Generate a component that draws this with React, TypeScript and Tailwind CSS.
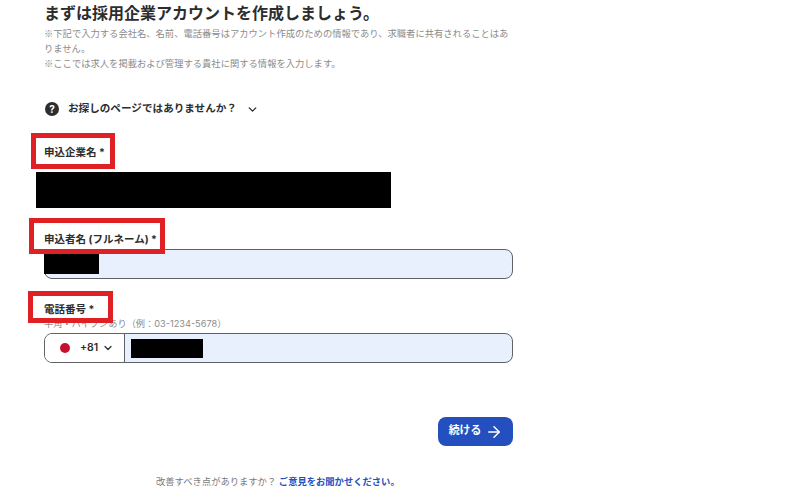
import React from 'react';
import { ArrowRight, ChevronDown } from 'lucide-react';

function RedBox({ className }: { className: string }): React.ReactElement {
  return <span className={`pointer-events-none absolute border-[5px] border-[#df2024] ${className}`} />;
}

export default function App(): React.ReactElement {
  return (
    <div className="h-[491px] w-[800px] overflow-hidden bg-white pl-[44px] font-['Inter','Noto_Sans_CJK_JP',sans-serif] text-[#2d2d2d]">
      <div className="flex w-[469px] flex-col">
        <h1 className="mt-[2px] h-[22px] text-[16px] leading-[22px] font-bold whitespace-nowrap text-[#2d2d2d]">
          まずは採用企業アカウントを作成しましょう。
        </h1>
        <p className="mt-[2px] font-['Noto_Sans_CJK_JP',sans-serif] text-[9.3px] leading-[15px] text-[#8b8b8b]">
          ※下記で入力する会社名、名前、電話番号はアカウント作成のための情報であり、求職者に共有されることはありません。
          <br />
          ※ここでは求人を掲載および管理する貴社に関する情報を入力します。
        </p>

        <div className="mt-[29px] flex h-[18px] items-center pl-[1px]">
          <span className="flex size-[14px] items-center justify-center rounded-full bg-[#2d2d2d] text-[10px] leading-none font-bold text-white">?</span>
          <span className="ml-[9px] text-[10.6px] leading-none font-bold">お探しのページではありませんか？</span>
          <ChevronDown className="ml-[9px] size-[13px]" strokeWidth={2.5} />
        </div>

        <div className="relative mt-[27px] h-[16px] text-[10.5px] leading-[16px] font-bold">
          申込企業名 *
          <RedBox className="-top-[12px] -left-[13px] h-[36px] w-[84px]" />
        </div>
        <div className="mt-[11px] -ml-[8px] h-[36px] w-[355px] bg-black" />

        <div className="relative mt-[24px] h-[16px] text-[10.5px] leading-[16px] font-bold">
          申込者名 (フルネーム) *
          <RedBox className="-top-[14px] -left-[15px] z-10 h-[36px] w-[136px]" />
        </div>
        <div className="relative mt-[1px] h-[30px] rounded-[8px] border border-[#5f6368] bg-[#e8f0fe]">
          <span className="absolute top-[4px] -left-[1px] h-[20px] w-[55px] bg-black" />
        </div>

        <div className="relative mt-[23px] h-[16px] text-[10.5px] leading-[16px] font-bold">
          電話番号 *
          <RedBox className="-top-[11px] -left-[16px] z-10 h-[32px] w-[85px]" />
        </div>
        <p className="-mt-[1px] h-[14px] text-[9.2px] leading-[14px] text-[#8b8b8b]">半角・ハイフンあり（例：03-1234-5678）</p>
        <div className="mt-[2px] flex h-[30px] overflow-hidden rounded-[8px] border border-[#5f6368] bg-[#e8f0fe]">
          <div className="flex w-[80px] items-center border-r border-[#5f6368] bg-white pl-[15px]">
            <span className="size-[10px] rounded-full bg-[#c8102e]" />
            <span className="ml-[10px] text-[10.5px] font-semibold">+81</span>
            <ChevronDown className="ml-[4px] size-[12px]" strokeWidth={2.5} />
          </div>
          <div className="flex items-center pl-[6px]">
            <span className="h-[19px] w-[72px] bg-black" />
          </div>
        </div>

        <div className="mt-[54px] flex justify-end">
          <button type="button" className="flex h-[29px] w-[75px] items-center justify-center gap-[4px] rounded-[8px] bg-[#2450bf] pl-[1px] text-[10.8px] font-bold text-white">
            続ける
            <ArrowRight className="size-[18px]" strokeWidth={2} />
          </button>
        </div>

        <p className="mt-[28px] ml-[112px] text-[9.3px] leading-[16px] whitespace-nowrap text-[#7a7a7a]">
          改善すべき点がありますか？ <a className="font-bold text-[#2450bf]">ご意見をお聞かせください。</a>
        </p>
      </div>
    </div>
  );
}
